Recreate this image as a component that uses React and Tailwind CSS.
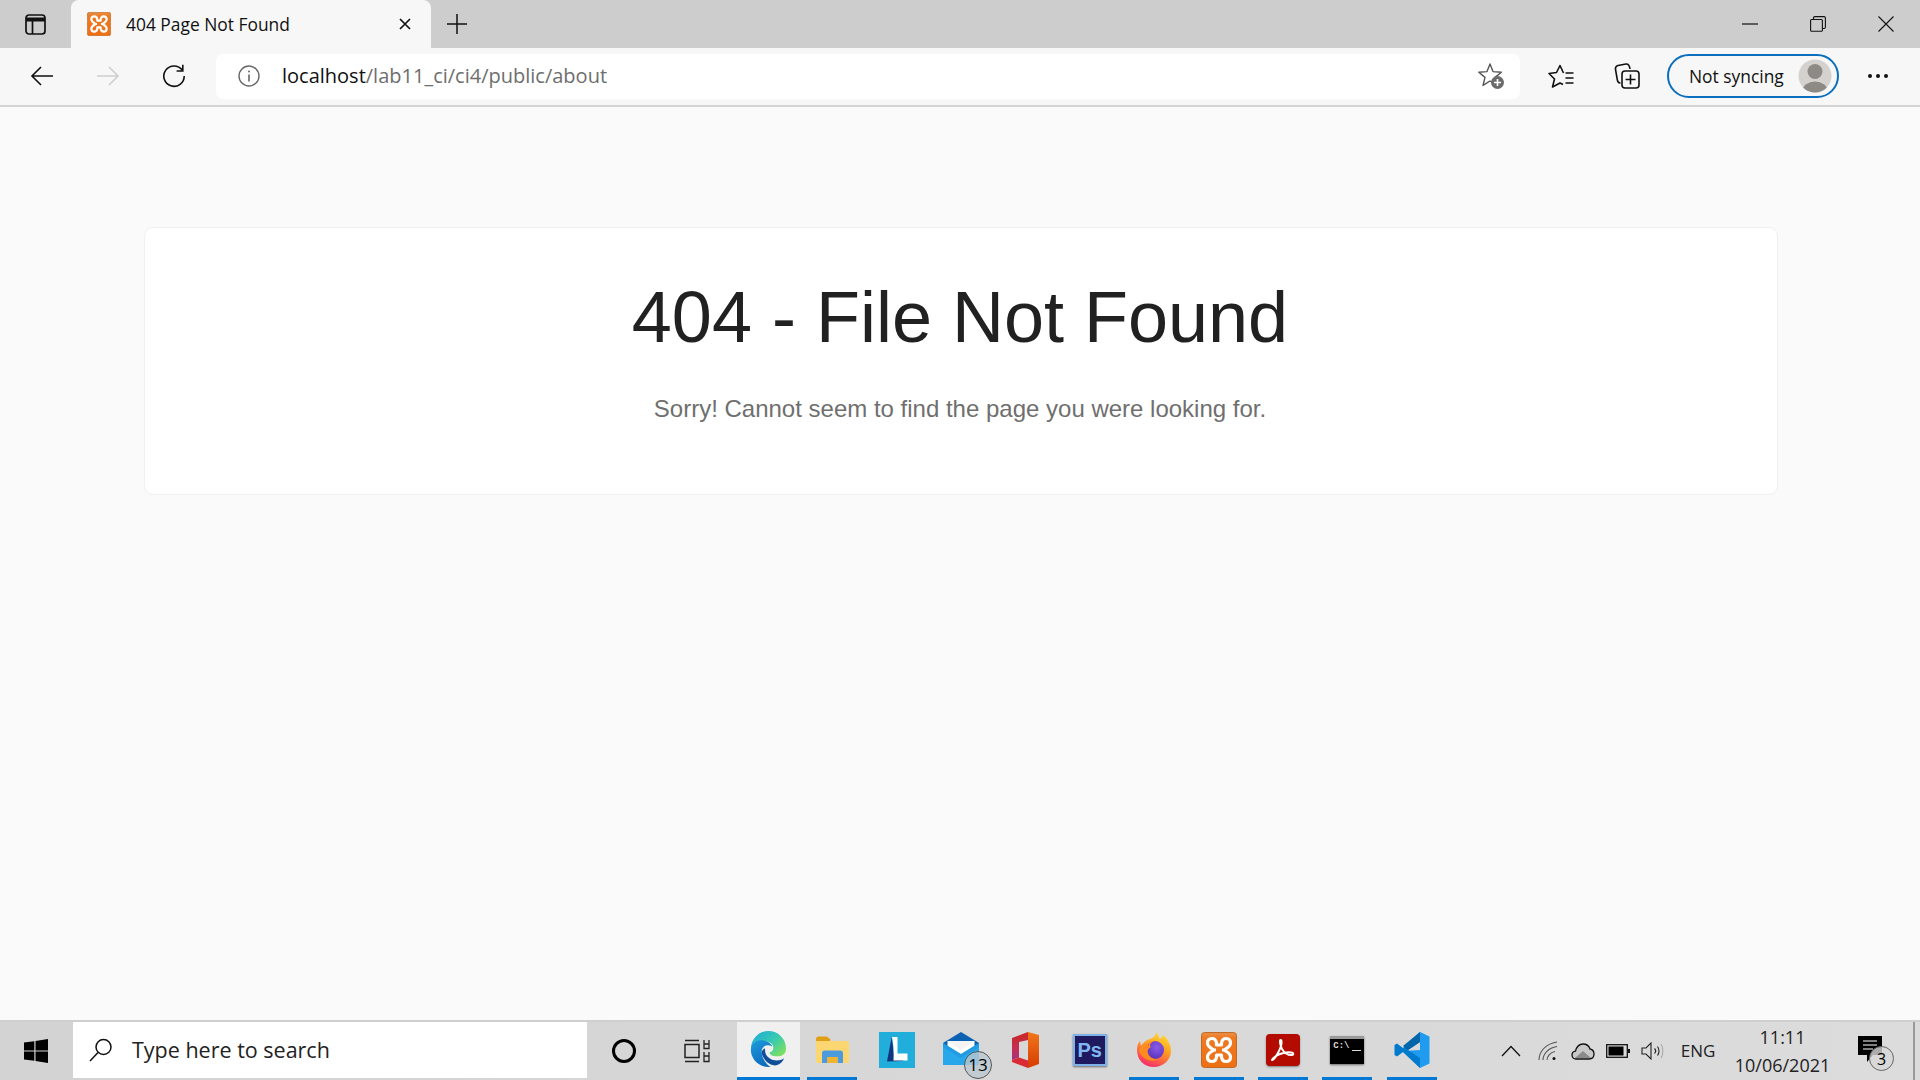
import React from "react";

const ui = { fontFamily: '"Open Sans", "Noto Sans", sans-serif' };

function Xampp({ size = 24, id = "xg" }) {
  return (
    <svg width={size} height={size} viewBox="0 0 36 36">
      <defs>
        <linearGradient id={id} x1="0" y1="0" x2="0" y2="1">
          <stop offset="0" stopColor="#e9914a" />
          <stop offset="0.15" stopColor="#ee7a22" />
          <stop offset="1" stopColor="#ee6f14" />
        </linearGradient>
      </defs>
      <rect x="0.5" y="0.5" width="35" height="35" rx="3" fill={`url(#${id})`} stroke="#bf6a26" />
      <path d="M13 18C10 16 6.5 15 6.5 11C6.5 8 8.5 6.5 11 6.5C13.5 6.5 15 8 15.5 11V13H20.5V11C21 8 22.5 6.5 25 6.5C27.5 6.5 29.5 8 29.5 11C29.5 15 26 16 23 18C26 20 29.5 21 29.5 25C29.5 28 27.5 29.5 25 29.5C22.5 29.5 21 28 20.5 25V23H15.5V25C15 28 13.5 29.5 11 29.5C8.5 29.5 6.5 28 6.5 25C6.5 21 10 20 13 18ZM10.5 18H15M25.5 18H21" fill="none" stroke="#fff" strokeWidth="3.2" strokeLinejoin="round" />
    </svg>
  );
}

function Sidebar() {
  return (
    <svg width="21" height="21" viewBox="0 0 21 21" fill="none" stroke="#111" strokeWidth="1.7">
      <rect x="1" y="1" width="19" height="19" rx="3" />
      <path d="M1 5.5H20" strokeWidth="4" />
      <path d="M7.5 6V20" />
    </svg>
  );
}

function Back({ color = "#111", flip }) {
  return (
    <svg width="24" height="24" viewBox="0 0 24 24" fill="none" stroke={color} strokeWidth="1.6" style={flip ? { transform: "scaleX(-1)" } : undefined}>
      <path d="M23 12H2M11 3L2 12L11 21" />
    </svg>
  );
}

function Refresh() {
  return (
    <svg width="24" height="24" viewBox="0 0 24 24" fill="none" stroke="#111" strokeWidth="1.6">
      <path d="M20.3 6.2A10.2 10.2 0 1 0 22.2 12" />
      <path d="M20.8 0.8V7H14.6" />
    </svg>
  );
}

function Info() {
  return (
    <svg width="24" height="24" viewBox="0 0 24 24" fill="none" stroke="#666" strokeWidth="1.4">
      <circle cx="12" cy="12" r="10" />
      <path d="M12 10.5V17.5" strokeWidth="1.6" />
      <circle cx="12" cy="7.5" r="1" fill="#666" stroke="none" />
    </svg>
  );
}

function StarPlus() {
  return (
    <svg width="28" height="28" viewBox="0 0 28 28" fill="none">
      <path d="M12 2L15 9.6L23.4 10.2L17 15.4L19 23.4L12 19L5 23.4L7 15.4L0.8 10.2L9 9.6Z" stroke="#555" strokeWidth="1.4" strokeLinejoin="round" transform="translate(1 0)" />
      <circle cx="20.5" cy="20.5" r="6.5" fill="#6b6b6b" />
      <path d="M20.5 17V24M17 20.5H24" stroke="#fff" strokeWidth="1.6" />
    </svg>
  );
}

function Favorites() {
  return (
    <svg width="26" height="24" viewBox="0 0 26 24" fill="none" stroke="#111" strokeWidth="1.6" strokeLinejoin="round">
      <path d="M15.5 9L12 1.5L8.5 8.5L1 9.5L6.5 15L4.5 23L12 19L15 20.5" />
      <path d="M17.5 9H25.5M17.5 14H25.5M17.5 19H25.5" />
    </svg>
  );
}

function Collections() {
  return (
    <svg width="26" height="26" viewBox="0 0 26 26" fill="none" stroke="#111" strokeWidth="1.6">
      <path d="M6.5 20C3.5 20 3.5 18 3 15L1.5 6.5C1.2 4 2 3 4 2.5L12 1C14.5 0.8 15.5 2 16 6" />
      <rect x="8" y="8" width="17" height="17" rx="3" />
      <path d="M16.5 11.5V21.5M11.5 16.5H21.5" />
    </svg>
  );
}

function Avatar() {
  return (
    <svg width="34" height="34" viewBox="0 0 34 34">
      <defs>
        <clipPath id="av"><circle cx="17" cy="17" r="16.5" /></clipPath>
      </defs>
      <circle cx="17" cy="17" r="16.5" fill="#d3d2cf" />
      <g clipPath="url(#av)" fill="#8d8985">
        <circle cx="17" cy="12.5" r="7.5" />
        <ellipse cx="17" cy="32" rx="12.5" ry="9.5" />
      </g>
    </svg>
  );
}

function WinLogo() {
  return (
    <svg width="24" height="24" viewBox="0 0 20 20" fill="#000">
      <path d="M0 3L8.6 1.8V9.5H0ZM9.6 1.7L20 0V9.5H9.6ZM0 10.5H8.6V18.2L0 17ZM9.6 10.5H20V20L9.6 18.4Z" />
    </svg>
  );
}

function SearchGlass() {
  return (
    <svg width="24" height="24" viewBox="0 0 24 24" fill="none" stroke="#111" strokeWidth="1.5">
      <circle cx="14.5" cy="9" r="7.5" />
      <path d="M9 14.5L1 23" />
    </svg>
  );
}

function TaskView() {
  return (
    <svg width="26" height="24" viewBox="0 0 26 24" fill="none" stroke="#222" strokeWidth="1.5">
      <rect x="1" y="5.5" width="14" height="13" />
      <path d="M1 1.5H15M1 22.5H15" />
      <path d="M20 1V9.5H25V1M20 13V22.5H25V13M20 5H25M20 17H25" strokeWidth="1.3" />
    </svg>
  );
}

function Edge() {
  return (
    <svg width="37" height="37" viewBox="0 0 38 38">
      <defs>
        <linearGradient id="eg1" x1="0" y1="0" x2="1" y2="0.8">
          <stop offset="0" stopColor="#1fa8dc" />
          <stop offset="0.55" stopColor="#35c9b4" />
          <stop offset="1" stopColor="#7ee05f" />
        </linearGradient>
        <linearGradient id="eg2" x1="0" y1="0" x2="0.5" y2="1">
          <stop offset="0" stopColor="#1e9bdf" />
          <stop offset="1" stopColor="#0c6bbb" />
        </linearGradient>
      </defs>
      <path d="M1 18A18 18 0 0 1 37 18C37 24 33 26 28 26C23 26 20 24 20 22C24 21 25 17 23 14C19 9 9 10 5 14Z" fill="url(#eg1)" />
      <path d="M1 18C2 11 9 8 15 10C20 11 22 14 23 16C18 13 13 15 12 20C11.5 26 15 33 21 37C10 38 0 29 1 18Z" fill="url(#eg2)" />
      <path d="M12 22C13 30 21 37 28 35C31 34 34 31 35 28C31 31 24 31 20 28C17 26 15 23 15.5 18C13.5 18.5 12 20 12 22Z" fill="#0f4f99" />
    </svg>
  );
}

function Explorer() {
  return (
    <svg width="33" height="28" viewBox="0 0 33 28">
      <path d="M0 3C0 1.5 1 0.5 2.5 0.5H11L14.5 3.5L14 6H0Z" fill="#e0a015" />
      <path d="M0 5H31C32.5 5 33 6 33 7V25C33 26.5 32.5 27 31 27H2C0.5 27 0 26.5 0 25Z" fill="#fcd671" />
      <path d="M6 27V17C6 15.5 7 14.5 8.5 14.5H24.5C26 14.5 27 15.5 27 17V27H21.5V21H11.5V27Z" fill="#4d9bdd" />
      <rect x="11.5" y="21" width="10" height="6" fill="#f3b32a" />
    </svg>
  );
}

function LApp() {
  return (
    <svg width="36" height="36" viewBox="0 0 36 36">
      <rect width="36" height="36" fill="#22aedb" />
      <path d="M12.7 5L8 29.5L24 29V27H15.5Z" fill="#12357f" />
      <path d="M13 5H18.5V21.5H28.5V28.5H14.5C15 20 14.5 12 13 5Z" fill="#fff" />
    </svg>
  );
}

function Mail() {
  return (
    <div className="relative w-[36px] h-[36px]">
      <svg width="36" height="34" viewBox="0 0 36 34">
        <path d="M0 11L18 0L36 11V14H0Z" fill="#0b62b3" />
        <path d="M4.5 9H31.5V17L18 25L4.5 17Z" fill="#fff" />
        <path d="M0 11L18 22L36 11V33H0Z" fill="#28a8ea" />
        <path d="M0 33V11L18 22L36 11V15L18 26L0 15Z" fill="#1c8de0" opacity="0.5" />
        <path d="M4.5 9H31.5L18 18Z" fill="#f4f4f4" />
      </svg>
      <div className="absolute left-[21px] top-[19px] w-[28px] h-[28px] rounded-full border border-[#555] bg-[#bcc8cfcc] flex items-center justify-center text-[17px] text-black leading-none">13</div>
    </div>
  );
}

function Office() {
  return (
    <svg width="28" height="36" viewBox="0 0 28 36">
      <defs>
        <linearGradient id="ofl" x1="0" y1="0" x2="0" y2="1">
          <stop offset="0" stopColor="#c9261d" />
          <stop offset="0.6" stopColor="#c42f55" />
          <stop offset="1" stopColor="#a0367f" />
        </linearGradient>
        <linearGradient id="ofr" x1="0" y1="0" x2="0" y2="1">
          <stop offset="0" stopColor="#f0771a" />
          <stop offset="1" stopColor="#d83b01" />
        </linearGradient>
      </defs>
      <path d="M17 0L28 3V32L17 36V28.5L17 8V0Z" fill="url(#ofr)" />
      <path d="M17 0L1 6V28L8 25.5V10L17 8Z" fill="url(#ofl)" />
      <path d="M1 28L8 25.5L17 28.5V36L1 30Z" fill="#d92b35" />
    </svg>
  );
}

function Ps() {
  return (
    <div className="w-[34px] h-[32px] bg-[#1f1a5f] border-2 border-[#7fb3e8] flex items-center justify-center shadow-[0_1px_2px_rgba(0,0,0,0.5)]">
      <span className="text-[20px] font-bold text-[#7fb8f0] leading-none" style={{ fontFamily: '"Liberation Sans", sans-serif' }}>Ps</span>
    </div>
  );
}

function Firefox() {
  return (
    <svg width="36" height="36" viewBox="0 0 36 36">
      <defs>
        <linearGradient id="ff" x1="0.75" y1="0" x2="0.3" y2="1">
          <stop offset="0" stopColor="#ffe033" />
          <stop offset="0.45" stopColor="#ff9a22" />
          <stop offset="1" stopColor="#f5286e" />
        </linearGradient>
        <radialGradient id="ffp" cx="0.6" cy="0.35" r="0.8">
          <stop offset="0" stopColor="#8a5be8" />
          <stop offset="1" stopColor="#4f2bb0" />
        </radialGradient>
      </defs>
      <path d="M20 0C22 3 23 5 24 7C27 5 27 3 27 3C31 6 35 12 35 19C35 28 27 35 18 35C8 35 1 28 1 18C1 14 2 11 4 9L5 14C7 11 10 8 14 7C17 6 20 4 20 0Z" fill="url(#ff)" />
      <circle cx="19" cy="18" r="9" fill="url(#ffp)" />
      <path d="M3 17C5 13 9 11 13 13C12 10 15 9 18 9C14 11 13 14 15 15C13 16 11 18 12 21C13 25 18 28 23 27C18 30 10 29 6 24C4 22 3 20 3 17Z" fill="#ff8a1f" />
    </svg>
  );
}

function Acrobat() {
  return (
    <div className="w-[34px] h-[32px] rounded-[4px] bg-[#b30b00] flex items-center justify-center shadow-[0_1px_2px_rgba(0,0,0,0.4)]">
      <svg width="26" height="26" viewBox="0 0 26 26" fill="none" stroke="#fff" strokeWidth="2" strokeLinejoin="round">
        <path d="M2 23C5 22 9 15 11 9C12 5 11.5 2.5 10.5 3C9.5 3.5 10 8 12 12C14 15.5 18 18 21 18C24 18 24 16 21 15.5C17 15 10 16 6 19C4 20.5 2 22 2 23Z" />
      </svg>
    </div>
  );
}

function Cmd() {
  return (
    <div className="w-[34px] h-[28px] bg-black border-t-[3px] border-[#9a9a9a] shadow-[0_1px_2px_rgba(0,0,0,0.5)] relative">
      <span className="absolute left-[3px] top-[3px] text-[9px] font-bold text-[#ddd] leading-none" style={{ fontFamily: '"Liberation Mono", monospace' }}>C:\</span>
      <div className="absolute right-[3px] top-[11px] w-[9px] h-[1px] bg-[#ddd]" />
    </div>
  );
}

function VSCode() {
  return (
    <svg width="36" height="36" viewBox="0 0 36 36">
      <path d="M26 0L35.5 4.5V31.5L26 36L8 19L26 18Z" fill="#1f9cf0" />
      <path d="M26 0L9 16L3 11.5L0.5 13V23L3 24.5L9 20L26 36L26 26L14 18L26 10Z" fill="#007acc" />
      <path d="M26 0V10L14 18L9 14Z" fill="#0065a9" />
    </svg>
  );
}

function Chevron() {
  return (
    <svg width="20" height="12" viewBox="0 0 20 12" fill="none" stroke="#111" strokeWidth="1.3">
      <path d="M1 11L10 1.5L19 11" />
    </svg>
  );
}

function Wifi() {
  return (
    <svg width="20" height="20" viewBox="0 0 20 20" fill="none" stroke="#555" strokeWidth="1.1">
      <path d="M1 19C1 11 7 3 19 1M5 19C5 13 10 7 19 5.5M9 19C9 15.5 12 11.5 17 10.5" />
      <circle cx="16" cy="17.5" r="1.5" fill="#111" stroke="none" />
    </svg>
  );
}

function Cloud() {
  return (
    <svg width="24" height="17" viewBox="0 0 24 17">
      <path d="M5 16C2.5 16 1 14 1 12C1 10 2.5 8.5 4.5 8.2C5.5 4 8.5 1 12 1C15.5 1 18 3 19 6C21.5 6.5 23 8.5 23 11C23 14 21 16 18 16Z" fill="#c8c8c8" stroke="#111" strokeWidth="1.3" />
      <path d="M4 15L12 8L20 15Z" fill="#8a8a8a" />
    </svg>
  );
}

function Battery() {
  return (
    <svg width="24" height="14" viewBox="0 0 24 14" fill="none">
      <rect x="0.7" y="0.7" width="20.6" height="12.6" stroke="#111" strokeWidth="1.3" />
      <rect x="2.5" y="2.5" width="15" height="9" fill="#000" />
      <rect x="22" y="5" width="2" height="4" fill="#111" />
    </svg>
  );
}

function Speaker() {
  return (
    <svg width="23" height="18" viewBox="0 0 23 18" fill="none" stroke="#222" strokeWidth="1.1">
      <path d="M1 6H5L10 1V17L5 12H1Z" />
      <path d="M13.5 6.5C15 8 15 10 13.5 11.5M16.5 4.5C18.5 7 18.5 11 16.5 13.5" />
      <path d="M20 2C22.5 6 22.5 12 20 16" stroke="#aaa" />
    </svg>
  );
}

function ActionCenter() {
  return (
    <div className="relative w-[24px] h-[30px]">
      <svg width="24" height="30" viewBox="0 0 24 30">
        <path d="M0 0H24V19H15L9 26V19H0Z" fill="#000" />
        <path d="M5 5H19M5 9H19M5 13H15" stroke="#fff" strokeWidth="1.2" />
      </svg>
      <div className="absolute left-[11px] top-[10px] w-[25px] h-[25px] rounded-full border border-[#666] bg-[#d8d8d8cc] flex items-center justify-center text-[16px] text-black leading-none">3</div>
    </div>
  );
}

function TaskItem({ children, running, active }) {
  return (
    <div className={`${active ? "w-[63px] bg-[#f0f0f0]" : "w-[64.4px]"} h-full flex flex-col`}>
      <div className="flex-1 flex items-center justify-center">{children}</div>
      <div className={`h-[3px] mx-auto ${active ? "w-full" : "w-[50px]"} ${running ? "bg-[#0078d4]" : ""}`} />
    </div>
  );
}

export default function App() {
  return (
    <div className="w-[1920px] h-[1080px] flex flex-col overflow-hidden bg-[#fafafa]" style={ui}>
      {/* Title bar */}
      <div className="h-[48px] bg-[#cdcdcd] flex items-stretch shrink-0">
        <div className="w-[71px] flex items-center justify-center"><Sidebar /></div>
        <div className="w-[360px] bg-[#f7f7f7] rounded-t-[8px] flex items-center pl-[16px] pr-[19px]">
          <Xampp size={24} id="xg-tab" />
          <span className="ml-[15px] text-[17.4px] text-[#111] whitespace-nowrap flex-1">404 Page Not Found</span>
          <svg width="14" height="14" viewBox="0 0 14 14" stroke="#111" strokeWidth="1.7">
            <path d="M2 2L12 12M12 2L2 12" />
          </svg>
        </div>
        <div className="w-[52px] flex items-center justify-center">
          <svg width="22" height="22" viewBox="0 0 22 22" stroke="#111" strokeWidth="1.5">
            <path d="M11 1V21M1 11H21" />
          </svg>
        </div>
        <div className="ml-auto flex items-center">
          <div className="w-[68px] flex justify-center">
            <svg width="16" height="2" viewBox="0 0 16 2"><path d="M0 1H16" stroke="#111" strokeWidth="1.2" /></svg>
          </div>
          <div className="w-[68px] flex justify-center">
            <svg width="16" height="16" viewBox="0 0 16 16" fill="none" stroke="#111" strokeWidth="1.1">
              <rect x="0.6" y="3.5" width="11.8" height="11.8" rx="1" />
              <path d="M3.5 3.5V2C3.5 1 4 0.6 5 0.6H14C15 0.6 15.4 1 15.4 2V11C15.4 12 15 12.5 14 12.5H12.4" />
            </svg>
          </div>
          <div className="w-[67px] mr-[1px] flex justify-center">
            <svg width="16" height="16" viewBox="0 0 16 16" stroke="#111" strokeWidth="1.1"><path d="M0.5 0.5L15.5 15.5M15.5 0.5L0.5 15.5" /></svg>
          </div>
        </div>
      </div>

      {/* Toolbar */}
      <div className="h-[59px] shrink-0 bg-[#f7f7f7] border-b-2 border-[#d4d4d4] flex items-center pl-[9px] pb-[1px]">
        <div className="w-[66px] flex justify-center"><Back /></div>
        <div className="w-[66px] flex justify-center"><Back color="#cfcfcf" flip /></div>
        <div className="w-[66px] flex justify-center"><Refresh /></div>
        <div className="ml-[9px] w-[1304px] h-[45px] bg-white rounded-[7px] flex items-center pl-[21px] pr-[15px]">
          <Info />
          <div className="ml-[21px] text-[20px] whitespace-nowrap flex-1">
            <span className="text-[#111]">localhost</span>
            <span className="text-[#6e6e6e]">/lab11_ci/ci4/public/about</span>
          </div>
          <StarPlus />
        </div>
        <div className="ml-[8px] w-[66px] flex justify-center"><Favorites /></div>
        <div className="w-[66px] flex justify-center"><Collections /></div>
        <div className="ml-[7px] w-[172px] h-[44px] rounded-full border-2 border-[#0a6fbd] flex items-center pl-[20px] pr-[5px]">
          <span className="text-[17.4px] text-[#111] whitespace-nowrap flex-1">Not syncing</span>
          <Avatar />
        </div>
        <div className="ml-[9px] w-[60px] flex justify-center gap-[3.5px]">
          <div className="w-[4.5px] h-[4.5px] rounded-full bg-[#111]" />
          <div className="w-[4.5px] h-[4.5px] rounded-full bg-[#111]" />
          <div className="w-[4.5px] h-[4.5px] rounded-full bg-[#111]" />
        </div>
      </div>

      {/* Page */}
      <div className="flex-1 pt-[120px] px-[144px]" style={{ fontFamily: '"Liberation Sans", Arial, sans-serif' }}>
        <div className="w-[1634px] h-[268px] bg-white border border-[#f0f0f0] rounded-[9px] flex flex-col items-center pt-[46px] pr-[2px]">
          <h1 className="text-[72px] font-normal leading-[86px] text-[#212121]">404 - File Not Found</h1>
          <p className="mt-[31px] text-[24px] leading-[36px] text-[#6f6f6f]">Sorry! Cannot seem to find the page you were looking for.</p>
        </div>
      </div>

      {/* Taskbar */}
      <div className="h-[60px] shrink-0 bg-gradient-to-r from-[#d3d3d3] to-[#dcdcdc] border-t-2 border-[#cfcfcf] flex items-stretch">
        <div className="w-[73px] flex items-center justify-center pr-[1px]"><WinLogo /></div>
        <div className="w-[514px] bg-white flex items-center pl-[16px] mb-[2px]">
          <SearchGlass />
          <span className="ml-[19px] text-[21.5px] text-[#222] whitespace-nowrap">Type here to search</span>
        </div>
        <div className="w-[73px] flex items-center justify-center">
          <div className="w-[24px] h-[24px] rounded-full border-[3.5px] border-[#000]" />
        </div>
        <div className="w-[73px] flex items-center justify-center"><TaskView /></div>
        <div className="ml-[4px] flex h-full">
          <TaskItem running active><Edge /></TaskItem>
          <TaskItem running><Explorer /></TaskItem>
          <TaskItem><LApp /></TaskItem>
          <TaskItem><Mail /></TaskItem>
          <TaskItem><Office /></TaskItem>
          <TaskItem><Ps /></TaskItem>
          <TaskItem running><Firefox /></TaskItem>
          <TaskItem running><Xampp size={36} id="xg-task" /></TaskItem>
          <TaskItem running><Acrobat /></TaskItem>
          <TaskItem running><Cmd /></TaskItem>
          <TaskItem running><VSCode /></TaskItem>
        </div>
        <div className="ml-auto flex items-center h-full">
          <div className="w-[37px] flex justify-center"><Chevron /></div>
          <div className="w-[37px] flex justify-center"><Wifi /></div>
          <div className="w-[33px] flex justify-center"><Cloud /></div>
          <div className="w-[37px] flex justify-center"><Battery /></div>
          <div className="w-[33px] flex justify-center"><Speaker /></div>
          <div className="w-[58px] text-center text-[17px] text-[#222]">ENG</div>
          <div className="w-[111px] flex flex-col items-center text-[18px] leading-[28px] text-[#222]">
            <span>11:11</span>
            <span>10/06/2021</span>
          </div>
          <div className="w-[64px] flex justify-center"><ActionCenter /></div>
          <div className="ml-[11px] w-[2px] h-full bg-[#9a9a9a]" />
          <div className="w-[5px]" />
        </div>
      </div>
    </div>
  );
}
